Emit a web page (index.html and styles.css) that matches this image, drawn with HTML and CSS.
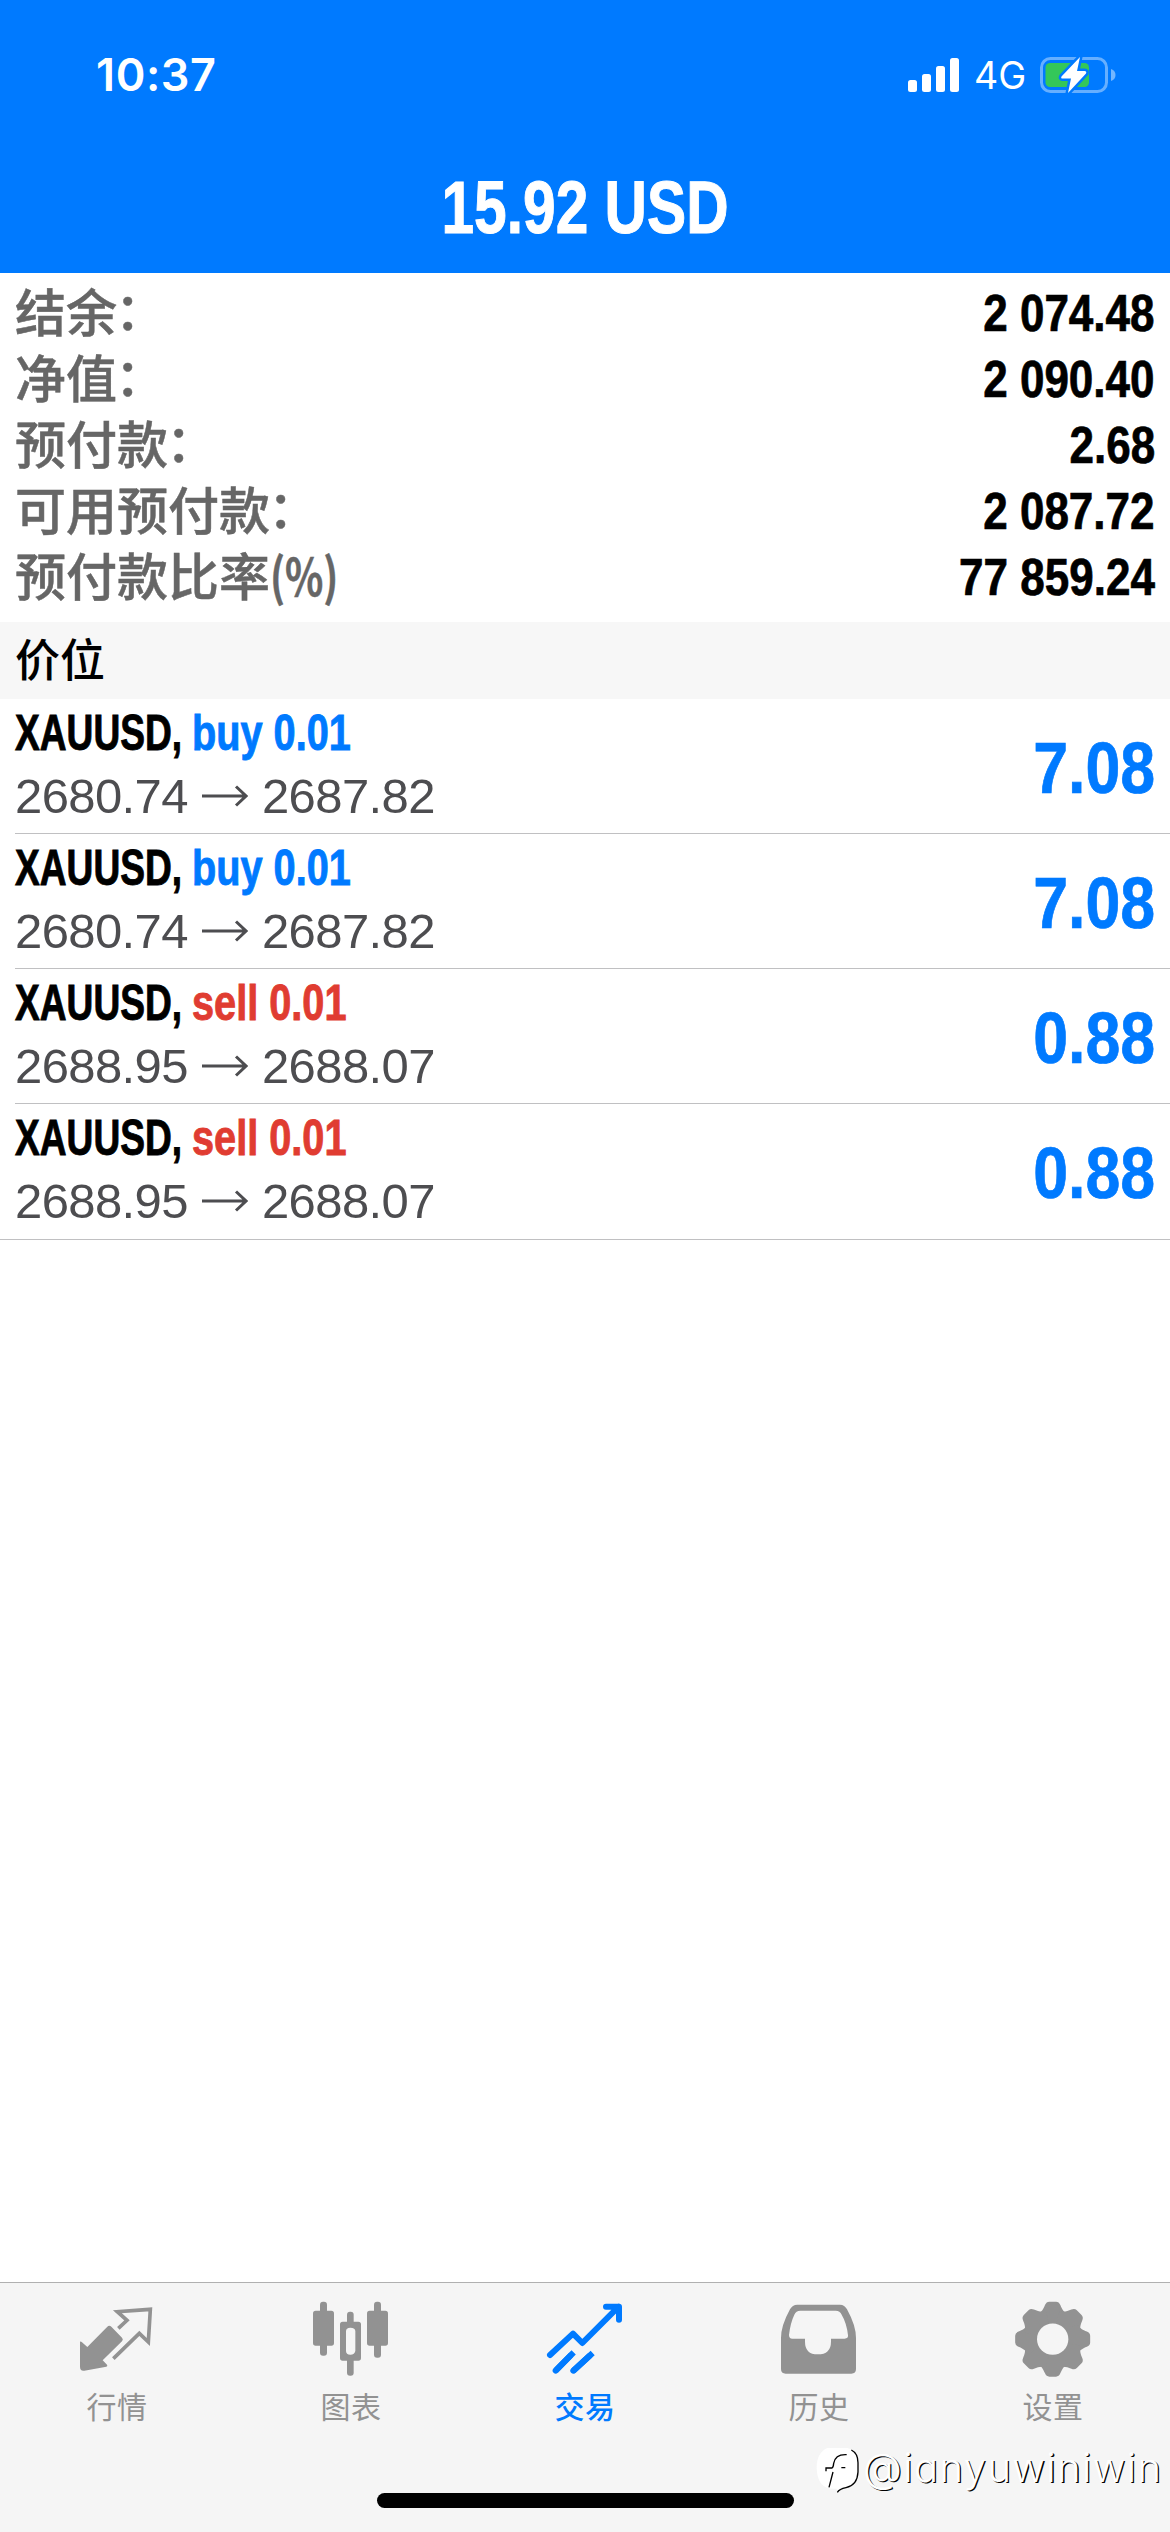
FILE: index.html
```html
<!DOCTYPE html>
<html lang="zh-CN">
<head>
<meta charset="utf-8">
<title>交易</title>
<link rel="stylesheet" href="styles.css">
</head>
<body>
<div class="app">
  <header class="header">
    <div class="status">
      <span class="time">10:37</span>
      <div class="status-right">
        <svg class="signal" viewBox="0 0 51 34"><rect x="0" y="22" width="9" height="12" rx="2.5"/><rect x="14" y="16" width="9" height="18" rx="2.5"/><rect x="28" y="8" width="9" height="26" rx="2.5"/><rect x="42" y="0" width="9" height="34" rx="2.5"/></svg>
        <span class="network">4G</span>
        <svg class="battery" viewBox="0 0 76 38">
          <rect x="1.5" y="2.5" width="65" height="33" rx="9" fill="none" stroke="#fff" stroke-opacity=".4" stroke-width="3"/>
          <path d="M71 13q4.500 1.500 4.500 6t-4.500 6z" fill="#fff" fill-opacity=".45"/>
          <rect x="5.500" y="7" width="43.500" height="24" rx="4.500" fill="#34c759"/>
          <path d="M40 1L21.500 20.500q-1 2 1 2H31L28 37L46 17.500q1-2.500-1.500-2.500H37z" fill="#fff" stroke="#007aff" stroke-width="5" stroke-linejoin="round" paint-order="stroke"/>
        </svg>
      </div>
    </div>
    <h1 class="title"><span>15.92 USD</span></h1>
  </header>

  <section class="summary">
    <div class="summary-row"><span class="label">结余<span class="colon">：</span></span><span class="value">2 074.48</span></div>
    <div class="summary-row"><span class="label">净值<span class="colon">：</span></span><span class="value">2 090.40</span></div>
    <div class="summary-row"><span class="label">预付款<span class="colon">：</span></span><span class="value">2.68</span></div>
    <div class="summary-row"><span class="label">可用预付款<span class="colon">：</span></span><span class="value">2 087.72</span></div>
    <div class="summary-row"><span class="label">预付款比率<span class="percent">(%)</span></span><span class="value">77 859.24</span></div>
  </section>

  <h2 class="section-title">价位</h2>

  <main class="positions">
    <article class="position">
      <div class="details">
        <div class="deal"><span class="symbol">XAUUSD,</span><span class="side buy">buy 0.01</span></div>
        <div class="prices"><span>2680.74</span><svg class="arrow" viewBox="0 0 46 22"><path d="M0 11H44M34 1.500L44 11L34 20.500"/></svg><span>2687.82</span></div>
      </div>
      <span class="profit">7.08</span>
    </article>
    <article class="position">
      <div class="details">
        <div class="deal"><span class="symbol">XAUUSD,</span><span class="side buy">buy 0.01</span></div>
        <div class="prices"><span>2680.74</span><svg class="arrow" viewBox="0 0 46 22"><path d="M0 11H44M34 1.500L44 11L34 20.500"/></svg><span>2687.82</span></div>
      </div>
      <span class="profit">7.08</span>
    </article>
    <article class="position">
      <div class="details">
        <div class="deal"><span class="symbol">XAUUSD,</span><span class="side sell">sell 0.01</span></div>
        <div class="prices"><span>2688.95</span><svg class="arrow" viewBox="0 0 46 22"><path d="M0 11H44M34 1.500L44 11L34 20.500"/></svg><span>2688.07</span></div>
      </div>
      <span class="profit">0.88</span>
    </article>
    <article class="position">
      <div class="details">
        <div class="deal"><span class="symbol">XAUUSD,</span><span class="side sell">sell 0.01</span></div>
        <div class="prices"><span>2688.95</span><svg class="arrow" viewBox="0 0 46 22"><path d="M0 11H44M34 1.500L44 11L34 20.500"/></svg><span>2688.07</span></div>
      </div>
      <span class="profit">0.88</span>
    </article>
  </main>

  <nav class="tabbar">
    <a class="tab">
      <svg class="icon" viewBox="231 115 240 240">
        <path d="M240 246q3-1 6 2l16 14L322 201q6-5 12 0l32 33q5 5 0 11L308 302l13 13q3 4-2 6L253 333q-13 2-13-12z" fill="currentColor"/>
        <path d="M355 206L381 182L352 156L451 149L445 247L418 221L340 297" fill="none" stroke="currentColor" stroke-width="11"/>
      </svg>
      <span>行情</span>
    </a>
    <a class="tab">
      <svg class="icon" viewBox="933 115 240 240" fill="currentColor">
        <rect x="960" y="126" width="21" height="162" rx="9"/><rect x="939" y="153" width="63" height="105" rx="8"/>
        <rect x="1122" y="126" width="21" height="168" rx="9"/><rect x="1101" y="153" width="63" height="105" rx="8"/>
        <rect x="1041" y="156" width="20" height="40" rx="9"/><rect x="1041" y="290" width="20" height="58" rx="9"/>
        <path fill-rule="evenodd" d="M1028 186h47q8 0 8 8v101q0 8-8 8h-47q-8 0-8-8V194q0-8 8-8zM1051 204q-13 0-13 11v59q0 11 13 11t15-11v-59q0-11-15-11z"/>
      </svg>
      <span>图表</span>
    </a>
    <a class="tab active">
      <svg class="icon" viewBox="375 115 240 240" fill="none" stroke="currentColor" stroke-width="18" stroke-linecap="round" stroke-linejoin="round">
        <path d="M390 286L459 222L487 250L596 141M558 141H597V180"/>
        <path d="M407 333L461 278M460 333L518 280" stroke-linecap="butt"/>
        <path d="M407 333L450 289M460 333L508 289"/>
        <path d="M575 141h22v22z" fill="currentColor" stroke="none"/>
      </svg>
      <span>交易</span>
    </a>
    <a class="tab">
      <svg class="icon" viewBox="117 115 240 240">
        <path fill="currentColor" fill-rule="evenodd" d="M172 135H300q14 0 21 14Q348 198 348 235V328q0 14-14 14H137q-14 0-14-14V235Q123 198 150 149q7-14 22-14zM181 153q-13 0-18 12Q151 190 147 226q0 11 10 11H195V246q0 38 38 38q40 0 40-38V237H314q11 0 10-10Q320 190 305 165q-5-12-18-12z"/>
      </svg>
      <span>历史</span>
    </a>
    <a class="tab">
      <svg class="icon" viewBox="819 115 240 240">
        <defs><path id="tooth" d="M893 165C906 156 910 148 915 136Q919 126 928 126H948Q957 126 961 136C966 148 970 156 983 165L938 238z"/></defs>
        <g fill="currentColor">
          <use href="#tooth"/><use href="#tooth" transform="rotate(45 938 238.500)"/><use href="#tooth" transform="rotate(90 938 238.500)"/><use href="#tooth" transform="rotate(135 938 238.500)"/><use href="#tooth" transform="rotate(180 938 238.500)"/><use href="#tooth" transform="rotate(225 938 238.500)"/><use href="#tooth" transform="rotate(270 938 238.500)"/><use href="#tooth" transform="rotate(315 938 238.500)"/>
        </g>
        <circle cx="938" cy="238.500" r="47" fill="#f5f5f5"/>
      </svg>
      <span>设置</span>
    </a>
    <div class="home-indicator"></div>
    <div class="watermark">
      <svg class="mark" viewBox="228 560 132 144">
        <path d="M262 566H322Q354 572 354 604V640Q352 680 318 686Q300 690 292 699L290 688Q232 694 230 625Q230 580 262 566z" fill="#fff"/>
        <path d="M334 572Q354 582 354 610V638Q352 678 318 685Q298 689 292 699" fill="none" stroke="#000" stroke-width="4"/>
        <path d="M320 586Q286 584 281 612Q280 624 276 626H258V636M279 638L267 684M304 625H316" fill="none" stroke="#000" stroke-width="4"/>
      </svg>
      <span>@ianyuwiniwin</span>
    </div>
  </nav>
</div>
</body>
</html>
```
FILE: styles.css
```css
* { box-sizing: border-box; }

body {
  margin: 0;
  background: #fff;
  font-family: "Liberation Sans", "Noto Sans CJK SC", sans-serif;
  color: #000;
}

.app {
  width: 1170px;
  height: 2532px;
  display: flex;
  flex-direction: column;
  overflow: hidden;
}

/* Header */
.header {
  height: 273px;
  flex: none;
  background: #007aff;
  color: #fff;
}

.status {
  height: 141px;
  padding: 8px 54px 0 96px;
  display: flex;
  justify-content: space-between;
  align-items: center;
  font-family: Inter, sans-serif;
}

.time {
  font-size: 45px;
  font-weight: 600;
  letter-spacing: .6px;
}

.status-right {
  display: flex;
  align-items: center;
}

.signal { width: 51px; height: 34px; fill: #fff; margin-right: 15px; }
.network { font-size: 37.5px; width: 51px; margin-right: 15px; padding-top: 2px; }
.battery { width: 76px; height: 38px; }

.title {
  margin: 0;
  height: 132px;
  display: flex;
  justify-content: center;
  align-items: center;
  font-size: 74px;
  font-weight: 700;
  line-height: 132px;
  padding-top: 2px;
}

.title span {
  transform: scaleX(.793);
  white-space: nowrap;
  -webkit-text-stroke: 1px currentColor;
}

/* Account summary */
.summary {
  height: 349px;
  flex: none;
  padding: 7px 15px 0;
}

.summary-row {
  height: 66px;
  display: flex;
  justify-content: space-between;
  align-items: flex-start;
}

.label {
  font-family: "Noto Sans CJK SC", sans-serif;
  font-size: 51px;
  font-weight: 500;
  line-height: 60px;
  color: #666;
  -webkit-text-stroke: .5px currentColor;
}

.colon {
  display: inline-block;
  transform: translate(-2px, -2px);
}

.percent {
  display: inline-block;
  font-weight: 700;
  transform: scaleX(.78);
  transform-origin: left;
}

.value {
  font-size: 51px;
  font-weight: 700;
  line-height: 68px;
  transform: scaleX(.863);
  transform-origin: right;
  -webkit-text-stroke: .7px currentColor;
}

/* Positions */
.section-title {
  margin: 0;
  height: 77px;
  flex: none;
  padding: 0 15px;
  background: #f7f7f7;
  font-family: "Noto Sans CJK SC", sans-serif;
  font-size: 45px;
  font-weight: 500;
  line-height: 71px;
}

.positions {
  flex: 1;
}

.position {
  height: 135px;
  margin-left: 15px;
  padding-right: 15px;
  border-bottom: 1px solid #c0c0c2;
  display: flex;
  justify-content: space-between;
}

.position:last-child {
  height: 136px;
  margin-left: 0;
  padding-left: 15px;
}

.details { padding-top: 2px; }

.deal {
  height: 63px;
  display: flex;
  font-size: 49.5px;
  font-weight: 700;
  line-height: 64px;
  white-space: nowrap;
  -webkit-text-stroke: .9px currentColor;
}

.symbol { width: 176.5px; transform: scaleX(.75); transform-origin: left; }
.side { transform: scaleX(.802); transform-origin: left; }
.symbol, .side { flex: none; }
.buy { color: #007aff; }
.sell { color: #e03c31; }

.prices {
  height: 64px;
  display: flex;
  align-items: center;
  font-size: 49px;
  line-height: 64px;
  letter-spacing: -.6px;
  color: #4d4d50;
}

.arrow {
  width: 46px;
  height: 22px;
  margin: 0 14px 0 14px;
  fill: none;
  stroke: currentColor;
  stroke-width: 3;
}

.profit {
  font-size: 73px;
  font-weight: 700;
  line-height: 137px;
  color: #007aff;
  transform: scaleX(.858);
  transform-origin: right;
  -webkit-text-stroke: .7px currentColor;
}

/* Tab bar */
.tabbar {
  position: relative;
  height: 250px;
  flex: none;
  display: grid;
  grid-template-columns: repeat(5, 1fr);
  padding-top: 15px;
  border-top: 1px solid #b0b0b0;
  background: #f5f5f5;
}

.tab {
  display: flex;
  flex-direction: column;
  align-items: center;
  gap: 7px;
  color: #929292;
  font-family: "Noto Sans CJK SC", sans-serif;
  font-size: 30px;
  line-height: 40px;
  letter-spacing: .6px;
}

.tab.active { color: #007aff; font-weight: 500; }
.icon { width: 80px; height: 80px; }

.home-indicator {
  position: absolute;
  left: 377px;
  top: 210px;
  width: 417px;
  height: 15px;
  border-radius: 7.5px;
  background: #000;
}

.watermark {
  position: absolute;
  left: 816px;
  top: 159px;
  display: flex;
  align-items: center;
  font-family: Inter, sans-serif;
  font-feature-settings: "cv11";
  font-size: 40px;
  line-height: 52px;
  font-weight: 300;
  letter-spacing: 1.4px;
  color: #fff;
  text-shadow: 1.3px .8px 0 #000;
}

.mark { width: 44px; height: 48px; margin: 4px 3px 0 0; }
```
